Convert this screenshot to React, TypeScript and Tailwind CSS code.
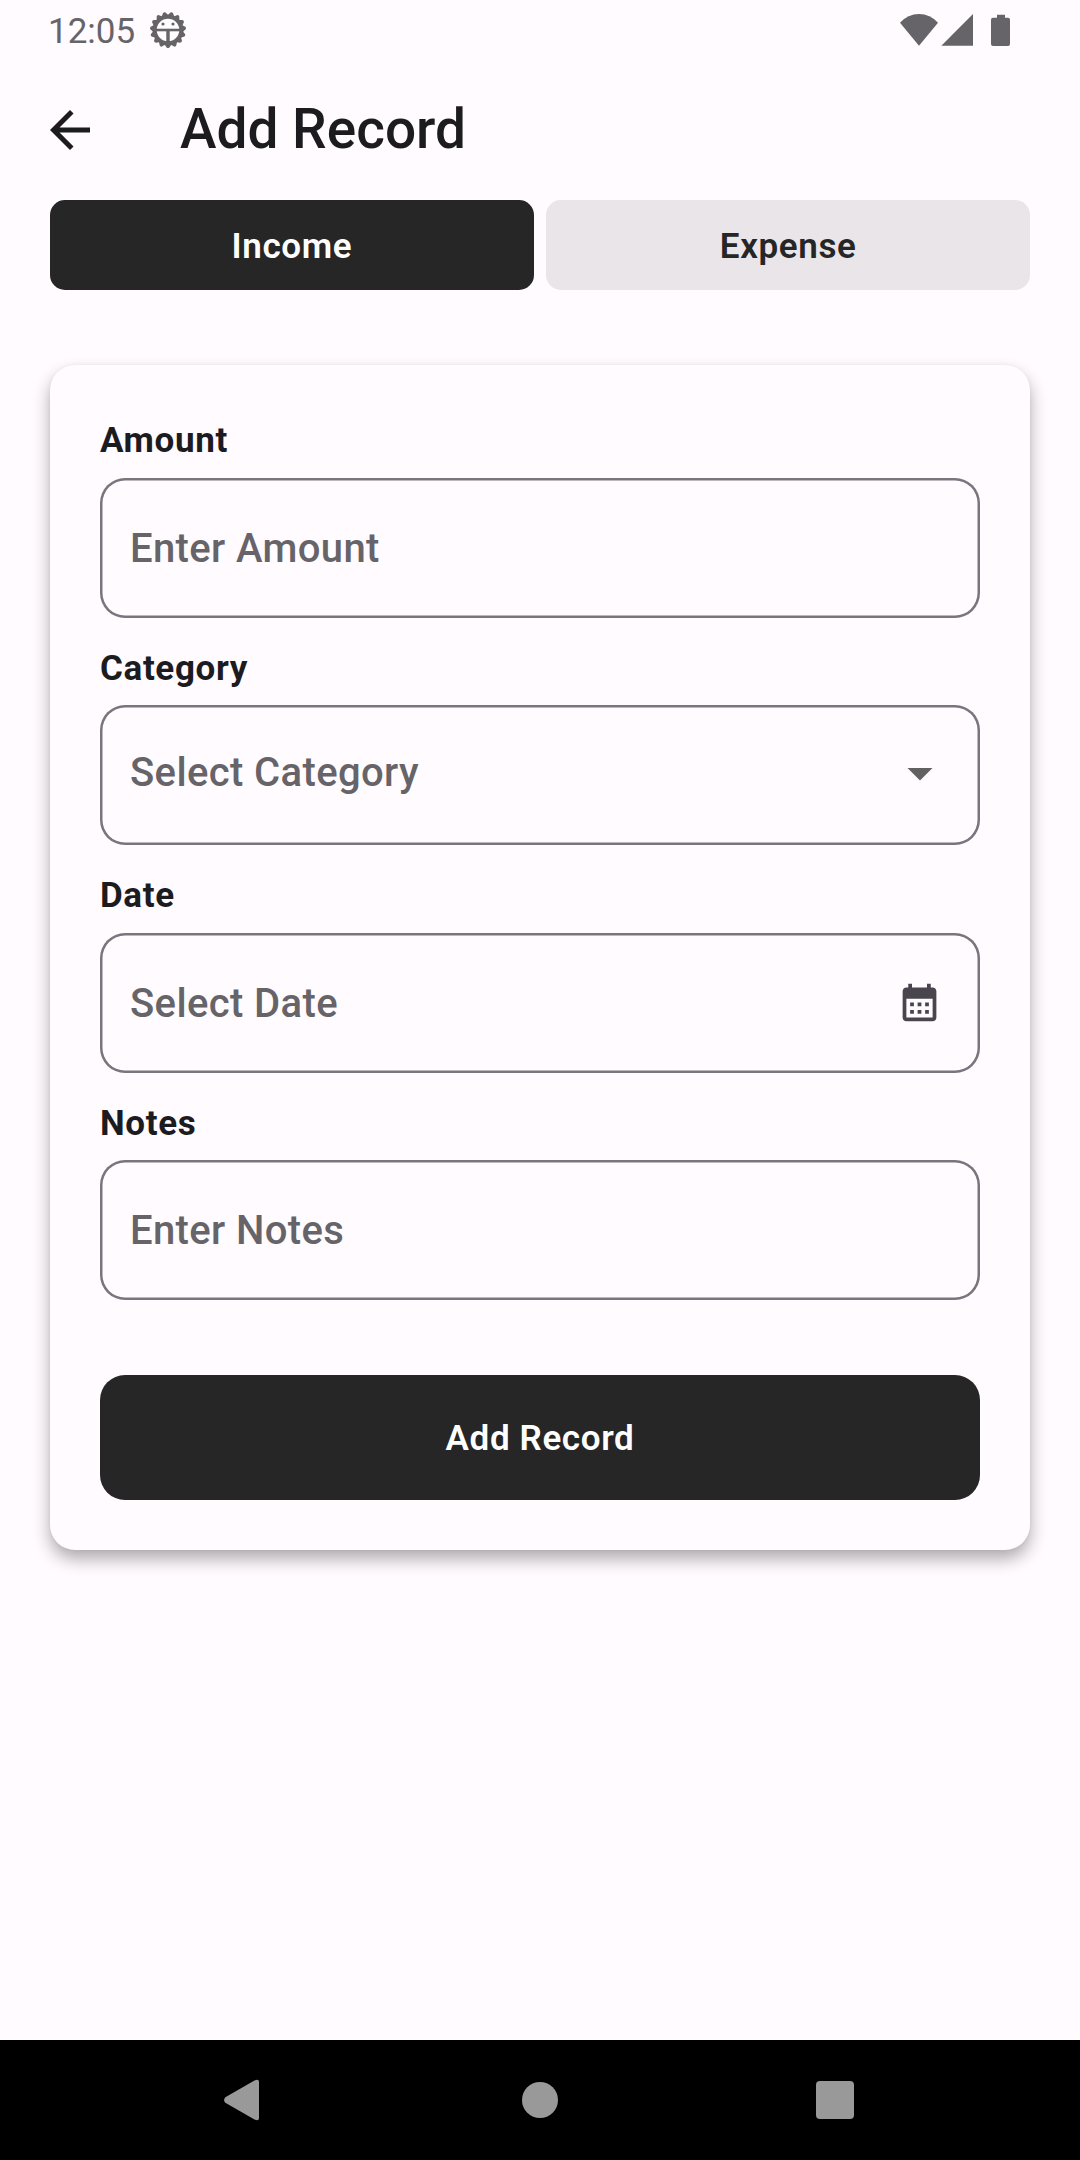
import type { ReactNode } from "react";

function Field({ name, text, raised, children }: { name: string; text: string; raised?: boolean; children?: ReactNode }) {
  return (
    <div>
      <div className="mb-[10.5px] text-[35px] leading-[52px] font-bold tracking-[0.625px] text-[#1c1b1f]">{name}</div>
      <div className="flex h-[140px] items-center justify-between rounded-[25px] pr-[30px] pl-[30px] text-[40px] leading-[60px] font-medium tracking-[0.375px] text-[#666468] shadow-[inset_0_0_0_2.5px_#79747e]">
        <span className={raised ? "pb-[5px]" : "pt-[2px]"}>{text}</span>
        {children}
      </div>
    </div>
  );
}

function BugGear() {
  const teeth = Array.from({ length: 15 }, (_, i) => i * 24);
  return (
    <svg className="ml-[14px] size-[38px]" viewBox="-19 -19 38 38" fill="none" stroke="#666468">
      <circle r="13.4" strokeWidth="4.2" />
      {teeth.map((a) => (
        <path key={a} d="M-3.2 14.5L-1.6 17.2Q0 19 1.6 17.2L3.2 14.5Z" fill="#666468" stroke="none" transform={`rotate(${a})`} />
      ))}
      <path d="M-13 0H13" strokeWidth="2.6" />
      <path d="M0 0V14" strokeWidth="3.4" />
      <circle cx="-5" cy="-6" r="1.6" fill="#666468" stroke="none" />
      <circle cx="5" cy="-6" r="1.6" fill="#666468" stroke="none" />
    </svg>
  );
}

export default function App() {
  return (
    <div className="flex h-[2160px] w-[1080px] flex-col bg-[#fffbff] font-['Roboto',sans-serif]">
      <div className="flex h-[60px] items-center pr-[70px] pl-[48px] text-[35px] leading-[40px] text-[#666468]">
        <span className="mt-[4px]">12:05</span>
        <BugGear />
        <svg className="ml-auto h-[34px] w-[110px]" viewBox="900 12 110 34" fill="#666468">
          <path d="M919 44.7L900 21.7Q908 13 919 13T938 21.7Z" />
          <path d="M941.3 44.7L973 13V44.7Z" />
          <path d="M997 13.7H1005V16.7H1008Q1010 16.7 1010 18.7V43Q1010 45 1008 45H993Q991 45 991 43V18.7Q991 16.7 993 16.7H997Z" />
        </svg>
      </div>
      <header className="flex h-[140px] items-center pl-[40px]">
        <svg className="size-[60px]" viewBox="0 0 24 24" fill="#1c1b1f">
          <path d="M20 11H7.83l5.59-5.59L12 4l-8 8 8 8 1.41-1.41L7.83 13H20v-2z" />
        </svg>
        <h1 className="mb-[2px] ml-[80px] text-[55px] leading-[70px] font-medium text-[#1c1b1f]">Add Record</h1>
      </header>
      <div className="mx-[50px] flex h-[90px] shrink-0 gap-[12.5px] text-[35px] leading-[50px] font-semibold tracking-[0.625px]">
        <button className="flex flex-1 items-center justify-center rounded-[15px] bg-[#262626] pt-[4px] text-white">Income</button>
        <button className="flex flex-1 items-center justify-center rounded-[15px] bg-[#e9e5e8] pt-[4px] text-[#262626]">Expense</button>
      </div>
      <main className="mx-[50px] mt-[75px] flex h-[1185px] shrink-0 flex-col gap-[25px] rounded-[25px] bg-[#fffbff] p-[50px] shadow-[0_9px_17px_rgba(0,0,0,0.32),0_0_4px_rgba(0,0,0,0.04)]">
        <Field name="Amount" text="Enter Amount" />
        <Field name="Category" text="Select Category" raised>
          <svg className="mb-[4px] size-[60px]" viewBox="0 0 24 24" fill="#616161">
            <path d="M7 10l5 5 5-5z" />
          </svg>
        </Field>
        <Field name="Date" text="Select Date">
          <svg className="mr-[8px] size-[45px]" viewBox="0 0 24 24" fill="#49454f">
            <path d="M19 4h-1V2h-2v2H8V2H6v2H5c-1.11 0-1.99.9-1.99 2L3 20c0 1.1.89 2 2 2h14c1.1 0 2-.9 2-2V6c0-1.1-.9-2-2-2zm0 16H5V10h14v10zM9 14H7v-2h2v2zm4 0h-2v-2h2v2zm4 0h-2v-2h2v2zm-8 4H7v-2h2v2zm4 0h-2v-2h2v2zm4 0h-2v-2h2v2z" />
          </svg>
        </Field>
        <Field name="Notes" text="Enter Notes" />
        <button className="mt-[50px] flex h-[125px] items-center justify-center rounded-[25px] bg-[#262626] pt-[2px] text-[35px] leading-[50px] font-semibold tracking-[0.625px] text-white">Add Record</button>
      </main>
      <nav className="mt-auto flex h-[120px] shrink-0 items-center bg-black">
        <svg className="ml-[222px] h-[42px] w-[40px]" viewBox="0 0 40 42" fill="#999">
          <path d="M3.3 18.2L32.5 1.4Q37 -0.6 37 3V39Q37 42.6 32.5 40.6L3.3 23.8Q0.8 21 3.3 18.2Z" />
        </svg>
        <div className="ml-[260px] size-[36px] rounded-full bg-[#999]" />
        <div className="ml-[258px] size-[38px] rounded-[4px] bg-[#999]" />
      </nav>
    </div>
  );
}
